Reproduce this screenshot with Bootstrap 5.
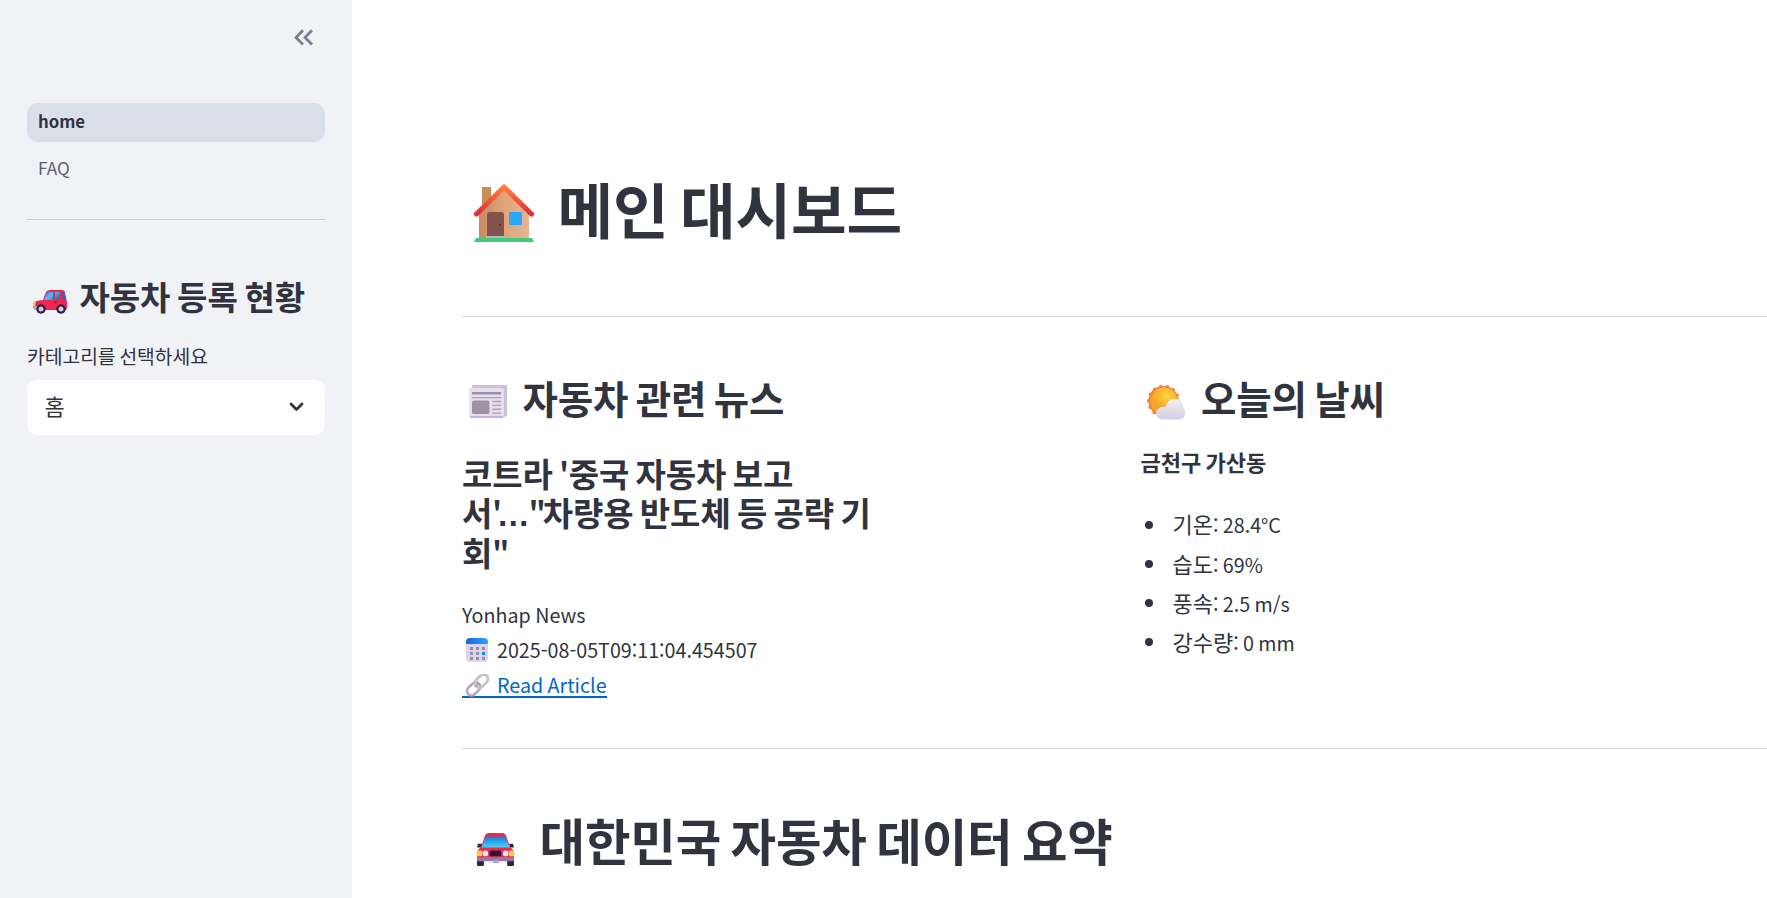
<!DOCTYPE html>
<html lang="ko">
<head>
<meta charset="utf-8">
<meta name="viewport" content="width=device-width, initial-scale=1">
<title>메인 대시보드</title>
<link href="https://cdn.jsdelivr.net/npm/bootstrap@5.3.0/dist/css/bootstrap.min.css" rel="stylesheet">
<style>
body{font-family:"Noto Sans CJK KR",sans-serif;font-size:22px;line-height:1.6;color:#31333f;background:#fff;height:898px;overflow:hidden}
h1,h2,h3{font-weight:700;line-height:1.2;margin:0;white-space:nowrap;color:#31333f;letter-spacing:-.003em;word-spacing:-.085em}
svg{display:block;flex:none}
/* Latin letters run smaller than Hangul */
.lat{font-size:.895em}
.dots{font-family:"Liberation Sans",sans-serif;line-height:0;margin:0 -1px 0 -5px}
.quo{letter-spacing:-3px}
.side{width:352px;background:#f0f2f6;padding:0 27px;flex:none}
.collapse-btn{height:103px;padding:29px 12px 0 0}
.side-link{height:39px;border-radius:11px;padding-left:11px;font-size:19.25px;line-height:35px;color:#5e606a;text-decoration:none;margin-bottom:8px}
.side-link.active{background:#dadfe9;color:#31333f;font-weight:600}
.side-link.active .lat{font-size:.87em}
.rule{height:1px;background:#d6d6d9;flex:none}
.side .rule{background:#c9cbd1;margin-top:30px}
.side-title{font-size:33px;margin-top:57px;word-spacing:-.07em}
.side-title svg{margin:13px 13px 0 5.500px}
.side-label{font-size:19.25px;margin-top:24px;line-height:30.8px;word-spacing:-.08em}
.picker{height:55px;background:#fff;border-radius:11px;margin-top:9px;padding:0 21px 5px 17.500px}
.main{padding-left:110px;min-width:0}
.page-title{font-size:60.5px;margin-top:172px}
.page-title svg{margin:12px 23.500px 0 12px}
.grid{margin-top:57px}
.col-news{width:678.500px}
.sub{font-size:38.5px}
.sub svg{margin:11px 16px 0 6.500px}
.sub svg.sky{margin-top:10px}
.news-title{font-size:33px;margin-top:34px}
.meta{margin-top:23px;line-height:35.2px;word-spacing:-.05em}
.meta svg{margin:2px 8px 0 3px}
.art{color:#0068c9;text-decoration:none;border-bottom:2px solid #0068c9;height:31px;line-height:31.500px}
.art svg{margin-top:7px}
.art .lat{margin-top:2px}
.place{font-weight:700;margin-top:24px;word-spacing:-.09em}
.facts{margin:28px 0 0 4px;word-spacing:-.055em}
.facts li{display:flex;align-items:center;height:35.2px;margin-bottom:4.1px;line-height:35.2px}
.facts li::before{content:"";width:8px;height:8px;border-radius:50%;background:#31333f;margin-right:20px}
.summary{font-size:49.5px;margin-top:61px}
.summary svg{margin:23px 24.500px 0 14px}
</style>
</head>
<body>
<div class="d-flex h-100">
<aside class="side">
  <div class="collapse-btn d-flex justify-content-end">
    <svg width="20" height="17" viewBox="0 0 20 17" fill="none" stroke="#7d808c" stroke-width="2.8"><path d="M10 1.2 3 8.400l7 7.200M19 1.200l-7 7.200 7 7.200"/></svg>
  </div>
  <nav>
    <a class="side-link active d-block"><span class="lat">home</span></a>
    <a class="side-link d-block"><span class="lat">FAQ</span></a>
  </nav>
  <div class="rule"></div>
  <h2 class="side-title d-flex align-items-start">
    <svg width="34" height="24" viewBox="0 0 34 24"><defs><linearGradient id="gl" x2="1" y2=".6"><stop stop-color="#1687e8"/><stop offset=".5" stop-color="#55b9fa"/><stop offset="1" stop-color="#1877cf"/></linearGradient></defs><path d="M10 10 13 2Q14 0 17 0H29Q32 0 32 3L34 12V18Q34 20 32 20H2L0 17V13Q1 11 10 10Z" fill="#ed2850"/><path d="M11 10 14 3Q15 2 17 2h3v8ZM22 2h5v8h-5Z" fill="url(#gl)"/><path d="M29 2h2l2 7-3 1Z" fill="#246ab7"/><path d="M0 16h5v4H1Z" fill="#bda5c9"/><path d="M0 12h3l-1 4H0Z" fill="#ffc83d"/><path d="M21 12h3" stroke="#9b183d"/><g fill="#321b41"><circle cx="8" cy="19" r="4.700"/><circle cx="28" cy="19" r="4.700"/></g><g fill="#d5c8e3"><circle cx="8" cy="19" r="2.500"/><circle cx="28" cy="19" r="2.500"/></g></svg>
    <span>자동차 등록 현황</span>
  </h2>
  <div class="side-label">카테고리를 선택하세요</div>
  <div class="picker d-flex align-items-center justify-content-between">
    <span>홈</span>
    <svg width="15" height="10" viewBox="0 0 15 10" fill="none" stroke="#31333f" stroke-width="2.800" stroke-linecap="round" stroke-linejoin="round" class="mt-1"><path d="m2 2 5.500 5.500L13 2"/></svg>
  </div>
</aside>
<main class="main flex-grow-1">
  <h1 class="page-title d-flex align-items-start">
    <svg width="60" height="58" viewBox="0 0 60 58"><defs><linearGradient id="wl" x2="1"><stop stop-color="#c98a62"/><stop offset=".5" stop-color="#dfa477"/><stop offset="1" stop-color="#e6b592"/></linearGradient><linearGradient id="rf" x2="0" y2="1"><stop stop-color="#ff7d40"/><stop offset="1" stop-color="#dc2f36"/></linearGradient></defs><path d="M8 3h9v22H8Z" fill="#c98d58"/><path d="M5 28 30 5l25 23v27H5Z" fill="url(#wl)"/><path d="m2.500 30 27.500-27 27.500 27" fill="none" stroke="url(#rf)" stroke-width="5" stroke-linecap="round" stroke-linejoin="round"/><path d="M13 53V31q0-3 3-3h11q3 0 3 3v22Z" fill="#83544f"/><circle cx="26" cy="41" r="1" fill="#4b2a2b"/><path d="M12 52h20v3H12Z" fill="#bcb5b6"/><rect x="35" y="28" width="13" height="13" rx="1" fill="#28a8fa"/><path d="M2 54h56l2 4H0Z" fill="#3dcc78"/></svg>
    <span>메인 대시보드</span>
  </h1>
  <div class="rule" style="margin-top:71px"></div>
  <div class="grid d-flex align-items-start">
    <section class="col-news">
      <h2 class="sub d-flex align-items-start">
        <svg width="38" height="33" viewBox="0 0 39 34"><path d="M3 1q0-1 1-1h34q1 0 1 1v29q0 3-3 3H6Z" fill="#cbc1d5"/><path d="M0 4q0-1 1-1h33q2 0 2 2v29H2q-2 0-2-2Z" fill="#e7dff0"/><path d="M1 33h34" stroke="#bda2d8" stroke-width="1.5"/><path d="M3 8.500h30" stroke="#978da0" stroke-width="2.500"/><path d="M3 13h30M24 17h9M24 21h9M24 25h9M24 29h9" stroke="#aaa0b2" stroke-width="1.400"/><rect x="3" y="16" width="18" height="14" rx="2" fill="#9c93a2"/></svg>
        <span>자동차 관련 뉴스</span>
      </h2>
      <h3 class="news-title">코트라 <span class="lat">'</span>중국 자동차 보고<br>서<span class="lat">'</span><span class="dots">…</span><span class="lat quo">"</span>차량용 반도체 등 공략 기<br>회<span class="lat">"</span></h3>
      <div class="meta">
        <div><span class="lat">Yonhap News</span></div>
        <div class="d-flex align-items-center">
          <svg width="24" height="24" viewBox="0 0 24 24"><defs><linearGradient id="cb" x2="1"><stop stop-color="#1765dc"/><stop offset="1" stop-color="#2ba2fb"/></linearGradient></defs><path d="M1 5h22v15q0 4-4 4H5q-4 0-4-4Z" fill="#dfd2ed"/><path d="M1 6V4q0-4 4-4h14q4 0 4 4v2Z" fill="url(#cb)"/><path d="M5 9h3v3H5Zm6 0h3v3h-3Zm6 0h3v3h-3ZM5 14h3v3H5Zm6 0h3v3h-3ZM5 19h3v3H5Zm6 0h3v3h-3Zm6 0h3v3h-3Z" fill="#988da5"/><path d="M17 14h3v3h-3Z" fill="#168bf0"/></svg>
          <span class="lat">2025-08-05T09:11:04.454507</span>
        </div>
        <a class="art d-inline-flex align-items-start">
          <svg width="24" height="24" viewBox="0 0 24 24" fill="none"><g transform="rotate(-45 12.500 11)"><rect x="-.5" y="6.500" width="15" height="9" rx="4.500" stroke="#b5a9bd" stroke-width="2.700"/><rect x="10.500" y="6.500" width="15" height="9" rx="4.500" stroke="#c9bfd0" stroke-width="2.700"/><path d="M10 11h5" stroke="#9f93a9" stroke-width="1.500"/></g></svg>
          <span class="lat">Read Article</span>
        </a>
      </div>
    </section>
    <section>
      <h2 class="sub d-flex align-items-start">
        <svg class="sky" width="38" height="36" viewBox="0 0 39 36"><defs><radialGradient id="sn" cx=".6" cy=".3"><stop stop-color="#ffd43b"/><stop offset="1" stop-color="#f2a62c"/></radialGradient><linearGradient id="cl" x2="0" y2="1"><stop stop-color="#f1f0f3"/><stop offset=".6" stop-color="#dedce3"/><stop offset="1" stop-color="#d3cbf0"/></linearGradient></defs><circle cx="17" cy="17" r="15.500" fill="#f58232"/><circle cx="17" cy="17" r="15.300" fill="none" stroke="#f58232" stroke-width="3.500" stroke-linecap="round" stroke-dasharray="0 6.870"/><circle cx="17.500" cy="17" r="14" fill="url(#sn)"/><path d="M16 36a6.500 6.500 0 0 1 0-13q2 0 3 .5a9.200 9.200 0 0 1 18.500 1A7 7 0 0 1 33 36Z" fill="url(#cl)"/></svg>
        <span>오늘의 날씨</span>
      </h2>
      <div class="place">금천구 가산동</div>
      <ul class="facts list-unstyled">
        <li><span>기온<span class="lat">: 28.4°C</span></span></li>
        <li><span>습도<span class="lat">: 69%</span></span></li>
        <li><span>풍속<span class="lat">: 2.5 m/s</span></span></li>
        <li><span>강수량<span class="lat">: 0 mm</span></span></li>
      </ul>
    </section>
  </div>
  <div class="rule" style="margin-top:42px"></div>
  <h1 class="summary d-flex align-items-start">
    <svg width="39" height="34" viewBox="0 0 40 35"><defs><linearGradient id="ws" x2="0" y2="1"><stop stop-color="#147bd1"/><stop offset="1" stop-color="#4bd2ff"/></linearGradient></defs><path d="M1 24h7v9q0 1-1 1H2q-1 0-1-1Zm31 0h7v9q0 1-1 1h-5q-1 0-1-1ZM2 11h4v4H1Zm32 0h4l1 4h-4Z" fill="#382044"/><path d="M9 3q1-3 4-3h14q3 0 4 3l4 12q4 2 4 6v5H1v-5q0-4 4-6Z" fill="#ee284e"/><path d="M10 3.500h20l4.500 11.500H5.500Z" fill="url(#ws)"/><path d="M1 25h38v3q0 1-2 1H3q-2 0-2-1Z" fill="#9778aa"/><rect x="14" y="18" width="12" height="6" rx="1.500" fill="#2c1935"/><path d="M1 18h5v6H1Zm33 0h5v6h-5Z" fill="#ffc83d"/><circle cx="9.500" cy="21" r="3" fill="#f8e8fa"/><circle cx="30.500" cy="21" r="3" fill="#f8e8fa"/><path d="M17 28h7v3h-7Z" fill="#bda5cc"/></svg>
    <span>대한민국 자동차 데이터 요약</span>
  </h1>
</main>
</div>
<script src="https://cdn.jsdelivr.net/npm/bootstrap@5.3.0/dist/js/bootstrap.bundle.min.js"></script>
</body>
</html>
